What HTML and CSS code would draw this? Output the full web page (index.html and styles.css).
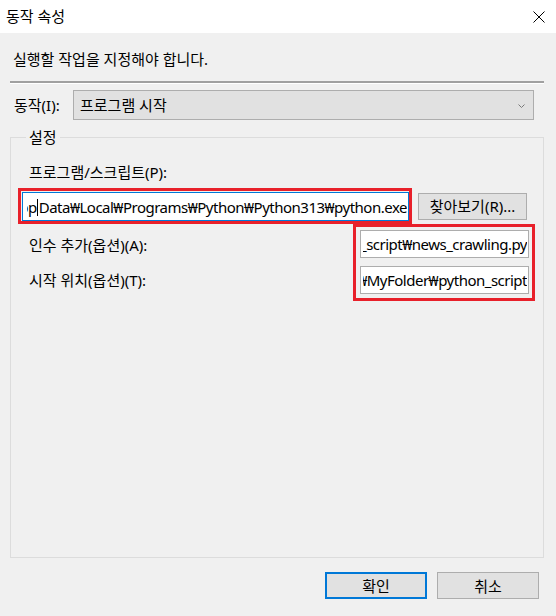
FILE: index.html
```html
<!DOCTYPE html>
<html lang="ko">
<head>
<meta charset="utf-8">
<title>동작 속성</title>
<link rel="stylesheet" href="styles.css">
</head>
<body>
<div class="window">
  <div class="titlebar">
    <span class="title">동작 속성</span>
    <svg class="close" width="12" height="12" viewBox="0 0 12 12"><path d="M0.5 0.5 L11.5 11.5 M11.5 0.5 L0.5 11.5" stroke="#000" stroke-width="1" fill="none"/></svg>
  </div>
  <div class="content">
    <div class="desc">실행할 작업을 지정해야 합니다.</div>
    <div class="sep"></div>
    <div class="action-row">
      <span class="action-label">동작(I):</span>
      <div class="dropdown">
        <span>프로그램 시작</span>
        <svg class="chev" width="7" height="4" viewBox="0 0 7 4"><path d="M0.5 0.5 L3.5 3.5 L6.5 0.5" stroke="#7a7a7a" stroke-width="1" fill="none"/></svg>
      </div>
    </div>
    <fieldset class="group">
      <legend class="legend">설정</legend>
      <div class="field-label">프로그램/스크립트(P):</div>
      <div class="program-row">
        <div class="mark mark-program">
          <div class="textbox focused"><span class="tb-text">C:₩Users₩user₩App<span class="caret"></span>Data₩Local₩Programs₩Python₩Python313₩python.exe</span></div>
        </div>
        <button class="btn browse">찾아보기(R)...</button>
      </div>
      <div class="args">
        <div class="arg-labels">
          <div class="field-label">인수 추가(옵션)(A):</div>
          <div class="field-label">시작 위치(옵션)(T):</div>
        </div>
        <div class="mark mark-args">
          <div class="textbox small"><span class="tb-text">C:₩Users₩user₩MyFolder₩python_script₩news_crawling.py</span></div>
          <div class="textbox small"><span class="tb-text">C:₩Users₩user₩MyFolder₩python_script</span></div>
        </div>
      </div>
    </fieldset>
    <div class="buttons">
      <button class="btn ok">확인</button>
      <button class="btn cancel">취소</button>
    </div>
  </div>
</div>
</body>
</html>
```
FILE: styles.css
```css
* { box-sizing: border-box; }
html, body { margin: 0; padding: 0; }
body {
  width: 556px;
  height: 616px;
  overflow: hidden;
  font-family: "Noto Sans", "Noto Sans CJK KR", sans-serif;
  font-size: 15px;
  color: #000;
  background: #f0f0f0;
}
.window {
  width: 556px;
  height: 616px;
  display: flex;
  flex-direction: column;
}
.titlebar {
  height: 33px;
  background: #fff;
  display: flex;
  align-items: center;
  justify-content: space-between;
  padding: 0 11px 2px 6px;
}
.title { line-height: 20px; }
.close { display: block; margin-top: 3px; }
.content {
  flex: 1;
  display: flex;
  flex-direction: column;
  padding: 0 12px 0 10px;
  background: #f0f0f0;
}
.desc {
  margin-top: 16px;
  line-height: 20px;
  padding-left: 3px;
}
.sep {
  margin-top: 12px;
  height: 3px;
  border-top: 2px solid #a0a0a0;
  border-bottom: 1px solid #ffffff;
}
.action-row {
  margin-top: 6px;
  display: flex;
  align-items: center;
  padding-right: 10px;
}
.action-label {
  width: 63px;
  padding-left: 4px;
  line-height: 20px;
}
.dropdown {
  flex: 1;
  height: 30px;
  background: #e1e1e1;
  border: 1px solid #adadad;
  display: flex;
  align-items: center;
  justify-content: space-between;
  padding: 0 8px 0 6px;
  line-height: 20px;
}
.chev { display: block; margin-top: 1px; }
.group {
  flex: 1;
  margin: 7px 0 0 0;
  padding: 0 8px 0 7px;
  border: 1px solid #dcdcdc;
  min-width: 0;
}
.legend {
  margin-left: 8px;
  padding: 0 3px;
  line-height: 20px;
}
.field-label {
  line-height: 20px;
  padding-left: 11px;
}
.group > .field-label { margin-top: 15px; }
.program-row {
  margin-top: 6px;
  display: flex;
  align-items: center;
}
.mark {
  border: 3px solid #e8202a;
}
.mark-program {
  width: 394px;
  padding: 1px 0 0 1px;
}
.textbox {
  background: #fff;
  border: 1px solid #adadad;
  display: flex;
  align-items: center;
  overflow: hidden;
  white-space: nowrap;
  line-height: 20px;
}
.textbox.focused {
  height: 29px;
  border-color: #0078d7;
  padding: 0 1px 0 4px;
}
.tb-text {
  display: block;
  flex: 1 1 0;
  min-width: 0;
  overflow: hidden;
  direction: rtl;
  text-align: right;
  white-space: nowrap;
  letter-spacing: -0.5px;
}
.caret {
  display: inline-block;
  width: 0;
  height: 17px;
  border-left: 1px solid #000;
  vertical-align: -3px;
  margin: 0 1px 0 0;
}
.btn {
  font-family: "Noto Sans", "Noto Sans CJK KR", sans-serif;
  font-size: 15px;
  line-height: 20px;
  color: #000;
  background: #e1e1e1;
  border: 1px solid #adadad;
  padding: 0;
  margin: 0;
}
.browse {
  width: 109px;
  height: 27px;
  margin-left: 6px;
}
.args {
  display: flex;
  align-items: flex-start;
}
.arg-labels {
  flex: 1;
  display: flex;
  flex-direction: column;
  gap: 15px;
  padding-top: 11px;
}
.mark-args {
  width: 182px;
  padding: 3px 3px 4px 4px;
  display: flex;
  flex-direction: column;
  gap: 8px;
}
.textbox.small {
  height: 28px;
  padding: 0 1px 0 2px;
}
.buttons {
  display: flex;
  justify-content: flex-end;
  gap: 10px;
  margin: 14px 5px 17px 0;
}
.ok, .cancel {
  width: 102px;
  height: 27px;
}
.ok { border: 2px solid #0078d7; }
```
